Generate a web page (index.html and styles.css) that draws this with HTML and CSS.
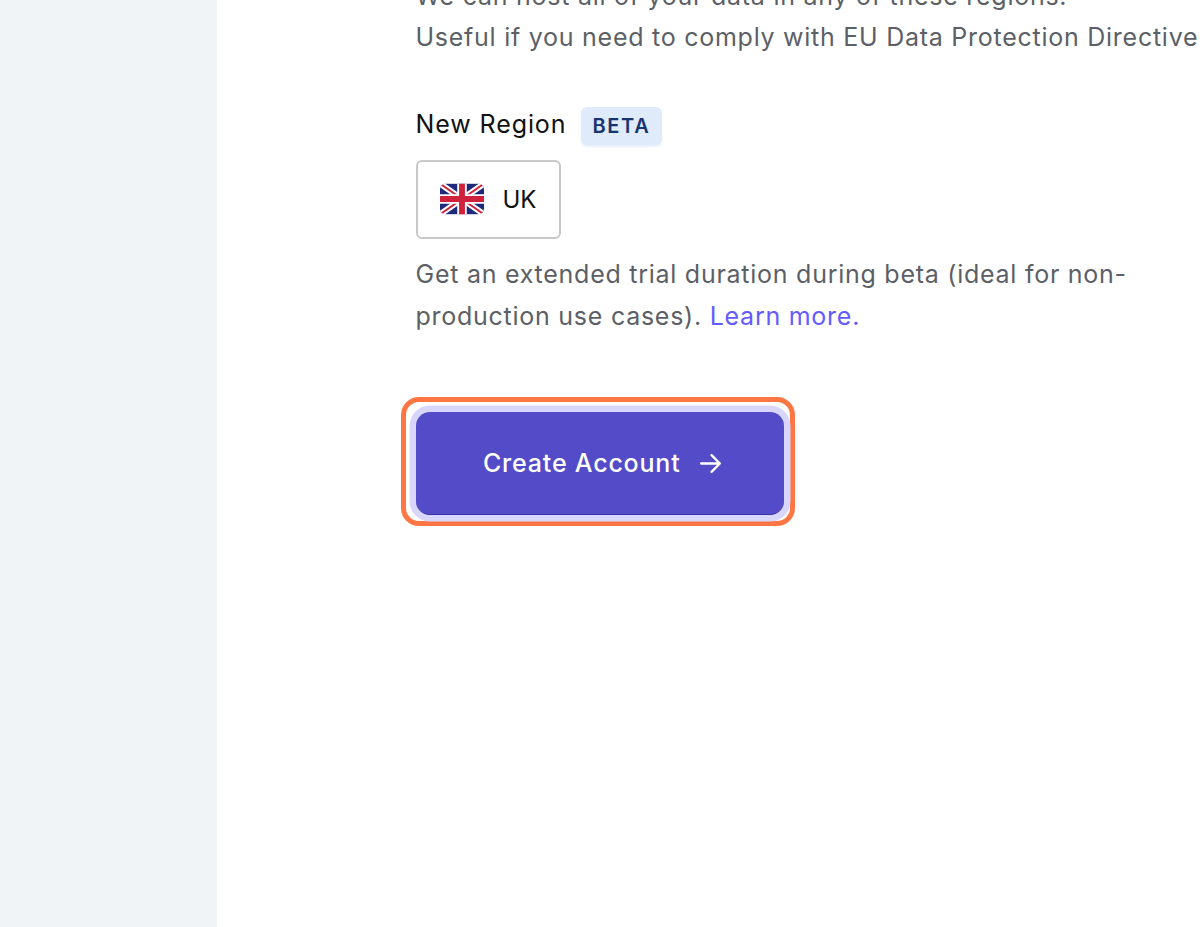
FILE: index.html
```html
<!DOCTYPE html>
<html lang="en">
  <head>
    <meta charset="UTF-8" />
    <title>Create Account</title>
    <link rel="stylesheet" href="styles.css">
  </head>
  <body>
    <div class="page">
      <aside class="sidebar"></aside>
      <main class="content">
        <p class="help">We can host all of your data in any of these regions.<br>Useful if you need to comply with EU Data Protection Directive</p>

        <div class="region-title">
          <span>New Region</span>
          <span class="badge">BETA</span>
        </div>

        <div class="region-card">
          <svg class="flag" viewBox="0 0 60 42" width="44" height="32">
            <defs>
              <clipPath id="flagClip"><rect width="60" height="42" rx="8" /></clipPath>
            </defs>
            <g clip-path="url(#flagClip)">
              <rect width="60" height="42" fill="#1f2a7a" />
              <path d="M0 0L60 42M60 0L0 42" stroke="#fff" stroke-width="8" />
              <path d="M0 0L60 42M60 0L0 42" stroke="#d0213c" stroke-width="2.6" />
              <path d="M30 0V42M0 21H60" stroke="#fff" stroke-width="13" />
              <path d="M30 0V42M0 21H60" stroke="#d0213c" stroke-width="8" />
            </g>
          </svg>
          <span>UK</span>
        </div>

        <p class="help beta-note">Get an extended trial duration during beta (ideal for non-<br>production use cases). <a href="#">Learn more.</a></p>

        <div class="highlight">
          <button class="create">
            <span>Create Account</span>
            <svg viewBox="0 0 24 24" width="25" height="25" fill="none" stroke="#fff" stroke-width="2.2" stroke-linecap="round" stroke-linejoin="round">
              <path d="M3 12H21M13 4L21 12L13 20" />
            </svg>
          </button>
        </div>
      </main>
    </div>
  </body>
</html>
```

FILE: styles.css
```css
html,
body {
  margin: 0;
  padding: 0;
  height: 100%;
  overflow: hidden;
  background-color: white;
}

body {
  font-family: Inter, "Liberation Sans", sans-serif;
}

.page {
  display: flex;
  height: 927px;
  overflow: hidden;
}

.sidebar {
  flex: 0 0 217px;
  background-color: #f0f4f7;
}

.content {
  flex: 1;
  min-width: 0;
  padding-left: 198.5px;
  margin-top: -24.5px;
}

.help {
  margin: 0;
  font-size: 25px;
  line-height: 41.5px;
  letter-spacing: 0.74px;
  color: #5c5f66;
  white-space: nowrap;
}

.help a {
  color: #635bff;
  text-decoration: none;
}

.region-title {
  display: flex;
  align-items: center;
  gap: 15px;
  height: 38px;
  margin-top: 46.5px;
  font-size: 25px;
  line-height: 38px;
  letter-spacing: 0.9px;
  color: #111;
}

.badge {
  margin-top: 3px;
  padding: 0 11px;
  border-radius: 6px;
  background-color: #dfebfa;
  box-shadow: 0 2px 2px #e9f1fb;
  font-size: 20px;
  font-weight: 600;
  letter-spacing: 1.7px;
  color: #17346f;
}

.region-card {
  display: inline-flex;
  align-items: center;
  gap: 19px;
  box-sizing: border-box;
  width: 145px;
  height: 79px;
  margin-top: 17px;
  padding-left: 22px;
  border: 2px solid #c8c8c8;
  border-radius: 6px;
  font-size: 24px;
  color: #111;
}

.flag {
  margin-top: -2px;
}

.beta-note {
  margin-top: 15px;
}

.highlight {
  box-sizing: border-box;
  width: 394px;
  height: 129px;
  margin-top: 60px;
  margin-left: -15px;
  padding: 10px 0 0 10px;
  border: 5px solid #ff7645;
  border-radius: 18px;
}

.create {
  display: flex;
  align-items: center;
  justify-content: center;
  gap: 17px;
  box-sizing: border-box;
  width: 368.5px;
  height: 103px;
  padding: 0 0 0 6px;
  border: none;
  border-bottom: 1px solid #3a30a8;
  border-radius: 14px;
  background-color: #534bc8;
  box-shadow: 0 0 0 6.5px #d9d6fd;
  font-family: inherit;
  font-size: 25px;
  font-weight: 450;
  letter-spacing: 0.8px;
  color: white;
}
```
